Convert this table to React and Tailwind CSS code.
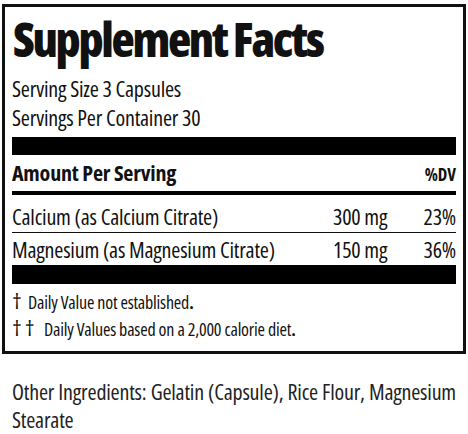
export default function App() {
  return (
    <div
      className="bg-white w-[468px] h-[434px] pt-[4px] px-[2px] text-[#111]"
      style={{ fontFamily: "'Open Sans', Roboto, sans-serif", fontStretch: "75%" }}
    >
      <div className="border-[3px] border-[#111] px-[7px] pb-[9px]">
        <h1 className="pt-[4px] text-[48px] leading-[56px] font-extrabold tracking-[-2.3px] pl-[1px]">
          Supplement Facts
        </h1>
        <div className="mt-[7px] text-[22px] leading-[29px] tracking-[-0.2px]">
          <p>Serving Size 3 Capsules</p>
          <p>Servings Per Container 30</p>
        </div>
        <div className="mt-[5px] h-[18px] bg-black" />
        <div className="flex items-baseline justify-between pt-[3px] pb-[3px]">
          <span className="text-[22px] leading-[29px] font-bold tracking-[-0.2px]">Amount Per Serving</span>
          <span className="text-[17px] font-bold">%DV</span>
        </div>
        <div className="h-[4px] bg-black" />
        <div className="flex text-[22px] leading-[29px] tracking-[-0.2px] pt-[7px] pb-[1px] border-b border-[#111]">
          <span className="flex-1">Calcium (as Calcium Citrate)</span>
          <span className="w-[83px]">300 mg</span>
          <span className="w-[40px] text-right">23%</span>
        </div>
        <div className="flex text-[22px] leading-[29px] tracking-[-0.2px] pt-[2px] pb-[1px]">
          <span className="flex-1">Magnesium (as Magnesium Citrate)</span>
          <span className="w-[83px]">150 mg</span>
          <span className="w-[40px] text-right">36%</span>
        </div>
        <div className="h-[19px] bg-black" />
        <div className="pt-[3px] pb-[1px] text-[18px] leading-[27px] tracking-[-0.2px]">
          <p className="flex items-baseline h-[27px]">
            <span className="w-[16px] text-[22px] leading-[27px]">†</span>
            <span>Daily Value not established<b>.</b></span>
          </p>
          <p className="flex items-baseline h-[27px]">
            <span className="w-[32px] text-[22px] leading-[27px] tracking-[3px]">††</span>
            <span>Daily Values based on a 2,000 calorie diet<b>.</b></span>
          </p>
        </div>
      </div>
      <p className="mt-[23px] px-[10px] text-[22px] leading-[28px] tracking-[-0.2px] text-justify text-[#222]">
        Other Ingredients: Gelatin (Capsule), Rice Flour, Magnesium Stearate
      </p>
    </div>
  );
}
